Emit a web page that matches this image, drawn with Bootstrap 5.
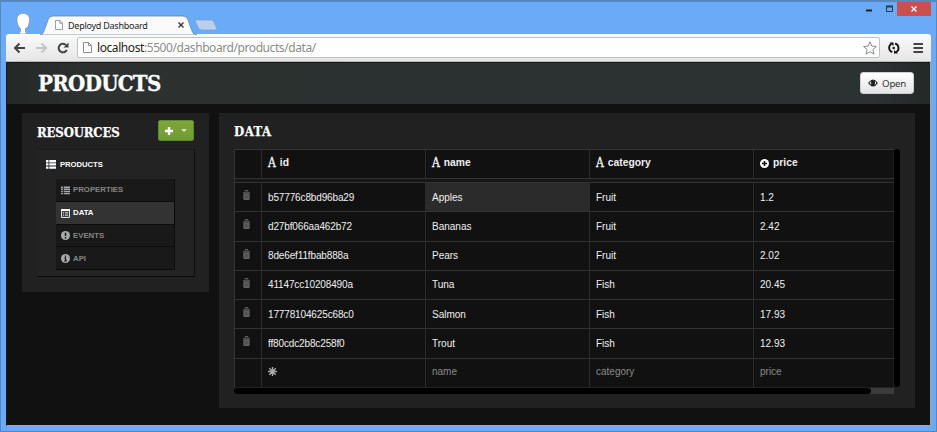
<!DOCTYPE html>
<html lang="en">
<head>
<meta charset="utf-8">
<title>Deployd Dashboard</title>
<link href="https://cdn.jsdelivr.net/npm/bootstrap@5.3.0/dist/css/bootstrap.min.css" rel="stylesheet">
<style>
body{width:937px;height:432px;overflow:hidden;background:#6aaaf6;font-family:"Liberation Sans",Arial,sans-serif;font-size:10px;line-height:1}
svg{display:block;flex:none}
.window{width:937px;height:432px;border:1px solid #5687bd;border-top-width:2px;padding:0 5px 5px}
.titlebar{height:32px}
.user{margin:10px 0 0 9px}
.tabstrip{width:180px;height:20px;margin:13px 0 0 9px;position:relative}
.tab-shape{position:absolute;left:0;top:0}
.tab-label{position:relative;height:20px;padding:0 28px 0 15px;font:9px "Noto Sans","Open Sans",sans-serif;letter-spacing:-.25px;color:#222}
.tab-label span{white-space:nowrap;padding-left:1px}
.controls{height:14px}
.closer{width:34px;height:14px;background:#c9504e}
.toolbar{height:28px;background:linear-gradient(#fafafa,#e6e6e6);border-bottom:1px solid #b8b8b8;border-radius:3px 3px 0 0;padding:0 7px 0 7px}
.address{height:21px;width:803px;background:#fff;border:1px solid #c0c0c0;border-radius:2px;padding:0 2px 0 5px;color:#8b8b8b;font:12px "Noto Sans","Open Sans",sans-serif;letter-spacing:-.42px;margin-left:7px}
.address b{font-weight:400;color:#222}
.address-text{padding-left:1px}
.page{height:364px;background:#111;border-right:1px solid #9cab94;border-bottom:1px solid #a9aaa0;border-left:1px solid #15191a}
.page-head{height:42px;background:linear-gradient(90deg,#242827,#2c3130 8%,#2b3231 94%,#242928);padding:0 16px 1px 31px;border-top:1px solid #171b1a}
.slab{font-family:"DejaVu Serif Condensed","DejaVu Serif",serif;font-stretch:condensed;font-weight:700;color:#fff;margin:0;line-height:1;white-space:nowrap}
.slab-lg{font-size:22px;letter-spacing:-.65px;-webkit-text-stroke:.3px #fff}
.slab-sm{font-size:13px;letter-spacing:-.15px;-webkit-text-stroke:.25px #fff}
.slab-data{letter-spacing:.5px;height:17px;padding-top:2px}
.open-btn{width:54px;height:22px;padding:0;border:1px solid #cfcfcf;border-radius:3px;background:linear-gradient(#fff,#e4e4e4);color:#333;font:9.7px "Noto Sans",sans-serif;letter-spacing:-.3px}
.panels{padding:9px 14px 0 15px;gap:10px}
.panel{background:#212121}
.side{width:187px;height:179px;padding:7px 15px 0 15px}
.add-btn{width:36px;height:21px;padding:0;border:1px solid #5f8a2b;border-radius:2px;background:linear-gradient(#7fa63c,#6f9b34);gap:8px}
.tree{width:158px;height:128px;margin-top:8px;padding:0 16px 0 19px;border-right:1px solid #101010;border-bottom:1px solid #090909;border-top:1px solid #1c1c1c;background:#232323}
.tree-title{height:29px;gap:4px;margin-left:-10px;color:#fff;font-size:7.7px;font-weight:700;letter-spacing:-.05px}
.side-menu{width:119px;border-right:1px solid #0b0b0b}
.side-menu a{height:22.75px;gap:3px;padding-left:5px;border-bottom:1px solid #0c0c0c;background:#191919;color:#858585;text-decoration:none;font-size:7.8px;font-weight:700;padding-top:1px}
.side-menu a.active{background:#333;color:#fff}
.main-panel{width:696px;height:295px;padding:10px 15px 0}
.sheet{width:666px;height:238px;margin-top:9px}
.grid{width:660px;height:238px;background:#111;border-left:1px solid #353535;border-top:1px solid #353535}
.grid-row{display:grid;grid-template-columns:27px 164px 164px 164px 140px;height:29.25px;border-bottom:1px solid #323232;color:#f0f0f0}
.grid-row>div{display:flex;align-items:center;padding:1px 0 0 6px;border-right:1px solid #2c2c2c}
.grid-row>div:last-child{border-right-color:#1c1c1c}
.grid-row>.tool{padding:0 3px 3px 0;justify-content:center}
.record-id{letter-spacing:-.14px}
.head-row{height:29px;font-weight:700;font-size:10.3px}
.head-row>div{gap:4px;padding-bottom:3px}
.type-a{font:12px "DejaVu Serif Condensed","DejaVu Serif",serif;-webkit-text-stroke:.3px #fff}
.freeze{height:4px;background:#171717;border-bottom:1px solid #323232}
.grid-row>.chosen{background:#2b2b2b}
.new-row{color:#8b8b8b;border-bottom-color:#222}
.grid-row.new-row>div{padding-top:0;padding-bottom:2px}
.vbar{width:6px;height:238px;background:#000;border-radius:3px}
.hbar{width:660px;height:6px;margin-top:1px;background:#3b3b3b;border-radius:3px 0 0 3px}
.hthumb{width:637px;height:6px;background:#000;border-radius:3px}
</style>
</head>
<body>
<svg width="0" height="0" class="position-absolute">
<defs>
<symbol id="trash" viewBox="0 0 10 12"><path fill="#626262" d="M3 2V1q0-1 1-1h2q1 0 1 1v1h2v1H1V2zm1-1v1h2V1zM1.500 3.500h7V10q0 1-1 1h-5q-1 0-1-1z"/><path stroke="#444" stroke-width=".7" d="M3.500 5v4.500M5 5v4.500M6.500 5v4.500"/></symbol>
<symbol id="rows" viewBox="0 0 10 9"><path fill="#aaa" d="M0 0h2v1.600H0zM3 0h7v1.600H3zM0 2.400h2V4H0zM3 2.400h7V4H3zM0 4.800h2v1.600H0zM3 4.800h7v1.600H3zM0 7.200h2v1.600H0zM3 7.200h7v1.600H3z"/></symbol>
<symbol id="page" viewBox="0 0 9 11"><path d="M.5.5h5l3 3v7h-8zM5.500.5v3h3" fill="#fff" stroke="#8d8d8d"/></symbol>
</defs></svg>
<div class="window">
  <div class="titlebar d-flex align-items-start">
    <svg class="user" width="16" height="22" viewBox="0 0 16 22"><path fill="#fff" stroke="#7d8ea5" stroke-width=".7" d="M8 1.500c-4 0-6 2.500-6 6 0 4.500 1.300 7.500 3.500 9v2.500L4 22h7.500l-1-2.500v-3c2.500-1 4-4 4-9 0-4-2.500-6-6.500-6z"/></svg>
    <div class="tabstrip">
      <svg class="tab-shape" width="190" height="20" viewBox="0 0 190 20"><path d="M0 20q3-.5 4-4l4-11q1-4 5-4h130q4 0 5 4l4 11q1 3.500 5 4z" fill="#fafafa" stroke="#6587ae" stroke-width=".8"/><path d="M156 5h15q2 0 3 2l2.500 6q.5 2-2 2h-13q-2 0-3-2l-3-6q-.5-2 .5-2z" fill="#b9cfeb" stroke="#819fc7" stroke-width=".7"/></svg>
      <div class="tab-label d-flex align-items-center"><svg width="8" height="10" class="me-1"><use href="#page"/></svg><span>Deployd Dashboard</span><svg class="ms-auto me-2" width="6" height="6" viewBox="0 0 6 6"><path d="M.5.5l5 5m0-5l-5 5" stroke="#333" stroke-width="1.300"/></svg></div>
    </div>
    <div class="controls d-flex ms-auto">
      <svg width="50" height="14" viewBox="0 0 50 14"><path d="M19 8.500h6" stroke="#222" stroke-width="2"/><path d="M39.500 4.500h6v5h-6z" fill="none" stroke="#29384a" stroke-width="1"/><path d="M39 4.500h7" stroke="#29384a" stroke-width="2"/></svg>
      <div class="closer d-flex align-items-center justify-content-center"><svg width="6" height="6" viewBox="0 0 6 6"><path d="M.5.5l5 5m0-5l-5 5" stroke="#fff" stroke-width="1.300"/></svg></div>
    </div>
  </div>
  <div class="toolbar d-flex align-items-center">
    <svg width="57" height="16" viewBox="0 0 57 16"><path d="M12 8H2M6.500 3.500L2 8l4.500 4.500" stroke="#444" stroke-width="2" fill="none"/><path d="M23 8h10M28.500 3.500L33 8l-4.500 4.500" stroke="#c5c5c5" stroke-width="2" fill="none"/><path d="M53 5a4.300 4.300 0 1 0 .8 5" stroke="#444" stroke-width="2" fill="none"/><path d="M55.500 2.500v5h-5z" fill="#444"/></svg>
    <div class="address d-flex align-items-center"><svg width="9" height="11" class="me-1"><use href="#page"/></svg><div class="address-text"><b>localhost</b>:5500/dashboard/products/data/</div>
      <svg class="ms-auto" width="14" height="14" viewBox="0 0 14 14"><path d="M7 .8l1.800 4.300 4.600.4-3.500 3 1.100 4.600L7 10.700l-4 2.400 1.100-4.600-3.500-3 4.600-.4z" fill="#fff" stroke="#888"/></svg></div>
    <svg class="ms-auto" width="37" height="14" viewBox="0 0 37 14"><path d="M4.500 2.800a4.600 4.600 0 0 0 .8 8.400M8 2.600a4.600 4.600 0 0 1 1 8.600" fill="none" stroke="#111" stroke-width="1.800"/><path d="M2.500 1.500h4v3.500zM11 12.500H7V9z" fill="#111"/><circle cx="6.700" cy="7" r="1.300" fill="#222"/><path d="M26.500 3h9.500M26.500 7h9.500M26.500 11h9.500" stroke="#444" stroke-width="2"/></svg>
  </div>
  <div class="page">
    <header class="page-head d-flex align-items-center justify-content-between">
      <h1 class="slab slab-lg">PRODUCTS</h1>
      <button class="btn open-btn d-flex align-items-center justify-content-center gap-1"><svg width="10" height="8" viewBox="0 0 10 8"><path d="M0 4q5-7 10 0-5 7-10 0z" fill="#222"/><path d="M1.500 4Q2 2.800 3.200 2.300 2.500 4.200 3.500 5.800 2.200 5.200 1.500 4zM8.500 4Q8 2.800 6.800 2.300 7.500 4.200 6.500 5.800 7.800 5.200 8.500 4z" fill="#eee"/></svg>Open</button>
    </header>
    <div class="panels d-flex align-items-start">
      <aside class="panel side">
        <div class="d-flex justify-content-between align-items-center"><h2 class="slab slab-sm pt-1">RESOURCES</h2>
          <button class="btn add-btn d-flex align-items-center justify-content-center"><svg width="8" height="8" viewBox="0 0 8 8"><path d="M4 0v8M0 4h8" stroke="#fff" stroke-width="2.400"/></svg><svg width="6" height="3" viewBox="0 0 6 3"><path d="M0 0h6L3 3z" fill="#d8e5b9"/></svg></button></div>
        <div class="tree">
          <div class="tree-title d-flex align-items-center"><svg width="10" height="9" viewBox="0 0 10 9"><path fill="#fff" d="M0 0h2.500v2.400H0zM3.300 0H10v2.400H3.300zM0 3.200h2.500v2.400H0zM3.300 3.200H10v2.400H3.300zM0 6.400h2.500v2.400H0zM3.300 6.400H10v2.400H3.300z"/></svg>PRODUCTS</div>
          <nav class="side-menu d-flex flex-column">
            <a href="#" class="d-flex align-items-center"><svg width="9" height="9"><use href="#rows"/></svg>PROPERTIES</a>
            <a href="#" class="d-flex align-items-center active"><svg width="9" height="9" viewBox="0 0 9 9"><path d="M.5.5h8v8h-8z" fill="#444" stroke="#ddd"/><path d="M0 1h9" stroke="#fff" stroke-width="2"/><path d="M2 3.500h1M2 5h1M2 6.500h1M4 3.500h3M4 5h3M4 6.500h3" stroke="#ccc" stroke-width=".8"/></svg>DATA</a>
            <a href="#" class="d-flex align-items-center"><svg width="9" height="9" viewBox="0 0 9 9"><circle cx="4.500" cy="4.500" r="4.500" fill="#aaa"/><path d="M4.500 1.700v3.300M4.500 6v1.400" stroke="#181818" stroke-width="1.500"/></svg>EVENTS</a>
            <a href="#" class="d-flex align-items-center"><svg width="9" height="9" viewBox="0 0 9 9"><circle cx="4.500" cy="4.500" r="4.500" fill="#aaa"/><path d="M4.500 1.500v1.400M3.300 4.200h1.300v2.700M3 7h3" fill="none" stroke="#181818" stroke-width="1.200"/></svg>API</a>
          </nav>
        </div>
      </aside>
      <main class="panel main-panel">
        <h2 class="slab slab-sm slab-data">DATA</h2>
        <div class="sheet d-flex">
          <div class="grid">
            <div class="grid-row head-row"><div></div><div><span class="type-a">A</span>id</div><div><span class="type-a">A</span>name</div><div><span class="type-a">A</span>category</div><div><svg width="9" height="9" viewBox="0 0 9 9"><circle cx="4.500" cy="4.500" r="4.500" fill="#fff"/><path d="M4.500 2v5M2 4.500h5" stroke="#111" stroke-width="1.500"/></svg>price</div></div>
            <div class="freeze"></div>
            <div class="grid-row"><div class="tool"><svg width="9" height="11"><use href="#trash"/></svg></div><div class="record-id">b57776c8bd96ba29</div><div class="chosen">Apples</div><div>Fruit</div><div>1.2</div></div>
            <div class="grid-row"><div class="tool"><svg width="9" height="11"><use href="#trash"/></svg></div><div class="record-id">d27bf066aa462b72</div><div>Bananas</div><div>Fruit</div><div>2.42</div></div>
            <div class="grid-row"><div class="tool"><svg width="9" height="11"><use href="#trash"/></svg></div><div class="record-id">8de6ef11fbab888a</div><div>Pears</div><div>Fruit</div><div>2.02</div></div>
            <div class="grid-row"><div class="tool"><svg width="9" height="11"><use href="#trash"/></svg></div><div class="record-id">41147cc10208490a</div><div>Tuna</div><div>Fish</div><div>20.45</div></div>
            <div class="grid-row"><div class="tool"><svg width="9" height="11"><use href="#trash"/></svg></div><div class="record-id">17778104625c68c0</div><div>Salmon</div><div>Fish</div><div>17.93</div></div>
            <div class="grid-row"><div class="tool"><svg width="9" height="11"><use href="#trash"/></svg></div><div class="record-id">ff80cdc2b8c258f0</div><div>Trout</div><div>Fish</div><div>12.93</div></div>
            <div class="grid-row new-row"><div></div><div><svg width="9" height="9" viewBox="0 0 9 9"><path d="M4.500 0v9M0 4.500h9M1.300 1.300l6.400 6.400M7.700 1.300L1.300 7.700" stroke="#aaa" stroke-width="1.400"/></svg></div><div>name</div><div>category</div><div>price</div></div>
          </div>
          <div class="vbar"></div>
        </div>
        <div class="hbar"><div class="hthumb"></div></div>
      </main>
    </div>
  </div>
</div>
<script src="https://cdn.jsdelivr.net/npm/bootstrap@5.3.0/dist/js/bootstrap.bundle.min.js"></script>
</body>
</html>
